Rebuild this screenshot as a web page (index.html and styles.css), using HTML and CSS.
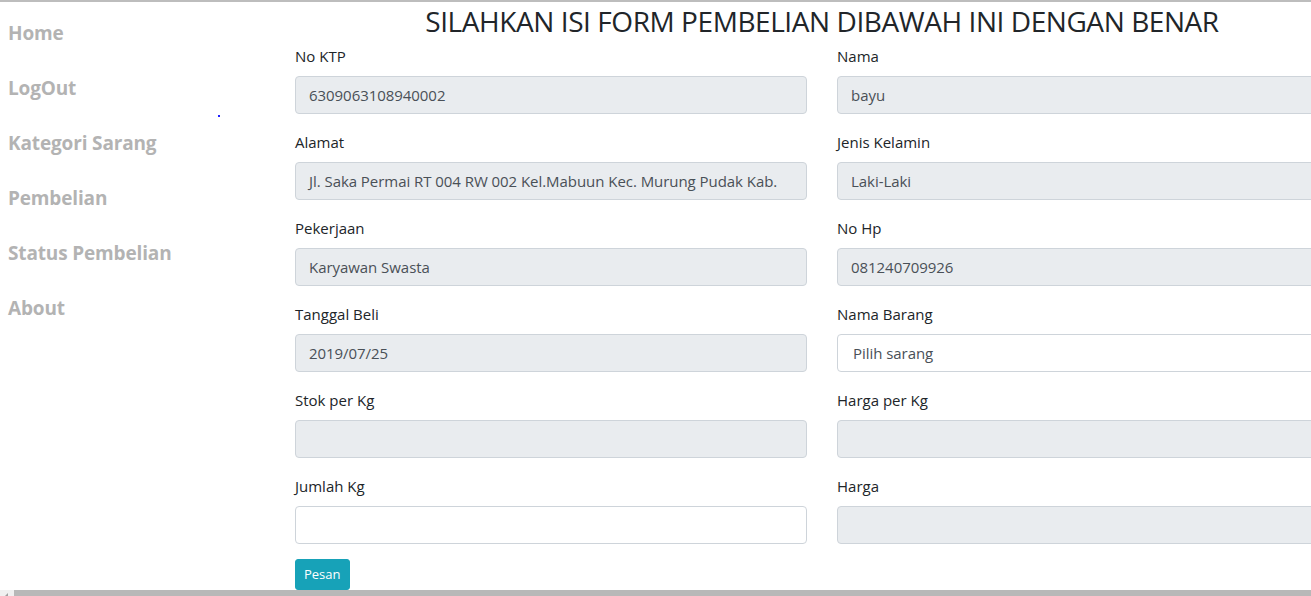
FILE: index.html
```html
<!DOCTYPE html>
<html lang="id">
<head>
<meta charset="utf-8">
<title>Form Pembelian</title>
<link rel="stylesheet" href="styles.css">
</head>
<body>
<div class="topline"></div>
<div class="layout">
  <nav class="sidebar">
    <a href="#" class="nav-link">Home</a>
    <a href="#" class="nav-link">LogOut</a>
    <a href="#" class="nav-link">Kategori Sarang</a>
    <a href="#" class="nav-link">Pembelian</a>
    <a href="#" class="nav-link">Status Pembelian</a>
    <a href="#" class="nav-link">About</a>
    <span class="dot"></span>
  </nav>
  <main class="main">
    <h2 class="title">SILAHKAN ISI FORM PEMBELIAN DIBAWAH INI DENGAN BENAR</h2>
    <form class="form-grid">
      <div class="form-group"><label>No KTP</label><div class="form-control readonly">6309063108940002</div></div>
      <div class="form-group"><label>Nama</label><div class="form-control readonly">bayu</div></div>
      <div class="form-group"><label>Alamat</label><div class="form-control readonly">Jl. Saka Permai RT 004 RW 002 Kel.Mabuun Kec. Murung Pudak Kab.</div></div>
      <div class="form-group"><label>Jenis Kelamin</label><div class="form-control readonly">Laki-Laki</div></div>
      <div class="form-group"><label>Pekerjaan</label><div class="form-control readonly">Karyawan Swasta</div></div>
      <div class="form-group"><label>No Hp</label><div class="form-control readonly">081240709926</div></div>
      <div class="form-group"><label>Tanggal Beli</label><div class="form-control readonly">2019/07/25</div></div>
      <div class="form-group"><label>Nama Barang</label><div class="form-control select">Pilih sarang</div></div>
      <div class="form-group"><label>Stok per Kg</label><div class="form-control readonly"></div></div>
      <div class="form-group"><label>Harga per Kg</label><div class="form-control readonly"></div></div>
      <div class="form-group"><label>Jumlah Kg</label><div class="form-control"></div></div>
      <div class="form-group"><label>Harga</label><div class="form-control readonly"></div></div>
      <div class="actions"><button type="button" class="btn">Pesan</button></div>
    </form>
  </main>
</div>
<div class="hscroll"><span class="hscroll-btn"></span><span class="hscroll-thumb"></span></div>
</body>
</html>
```
FILE: styles.css
```css
html, body {
  margin: 0;
  padding: 0;
  overflow: hidden;
  height: 596px;
  background: #fff;
}
body {
  font-family: "Open Sans", "Noto Sans", sans-serif;
  color: #212529;
  font-size: 16px;
  line-height: 1.5;
}
.topline {
  height: 2px;
  background: #bdbdbd;
}
.layout {
  display: grid;
  grid-template-columns: 280px 1084px;
}
.sidebar {
  position: relative;
  display: flex;
  flex-direction: column;
  padding: 18px 0 0 8px;
  gap: 29px;
}
.nav-link {
  font-weight: 700;
  font-size: 19px;
  line-height: 26px;
  color: #b3b3b3;
  text-decoration: none;
  letter-spacing: -0.15px;
}
.dot {
  position: absolute;
  left: 218px;
  top: 113px;
  width: 2px;
  height: 2px;
  background: #2020ff;
}
.main {
  display: flex;
  flex-direction: column;
}
.title {
  margin: 2px 0 6px;
  text-align: center;
  font-weight: 400;
  font-size: 28px;
  line-height: 34px;
  letter-spacing: -0.43px;
}
.form-grid {
  display: grid;
  grid-template-columns: 1fr 1fr;
  column-gap: 30px;
  padding: 0 15px;
}
.form-group {
  margin-bottom: 16px;
  display: flex;
  flex-direction: column;
  min-width: 0;
}
.form-group label {
  display: block;
  margin-bottom: 8px;
  font-size: 15px;
  line-height: 24px;
}
.form-control {
  height: 38px;
  box-sizing: border-box;
  padding: 6px 13px;
  border: 1px solid #ced4da;
  border-radius: 4px;
  background: #fff;
  color: #495057;
  font-size: 15px;
  line-height: 24px;
  white-space: nowrap;
  overflow: hidden;
  letter-spacing: -0.05px;
}
.form-control.readonly {
  background: #e9ecef;
}
.form-control.select {
  padding-left: 15px;
}
.actions {
  grid-column: 1 / 2;
  margin-top: -1px;
}
.btn {
  font-family: inherit;
  font-size: 13px;
  line-height: 21px;
  padding: 4px 8px;
  height: 31px;
  color: #fff;
  background: #17a2b8;
  border: 1px solid #17a2b8;
  border-radius: 3px;
}
.hscroll {
  position: fixed;
  left: 0;
  right: 0;
  top: 590px;
  height: 17px;
  display: flex;
  background: #f0f0f0;
}
.hscroll-btn {
  width: 14px;
  background: #f0f0f0;
  position: relative;
}
.hscroll-btn::after {
  content: "";
  position: absolute;
  left: 5px;
  top: 3px;
  border-right: 3px solid #a0a0a0;
  border-top: 3px solid transparent;
  border-bottom: 3px solid transparent;
}
.hscroll-thumb {
  flex: 1;
  background: #b8b8b8;
}
```
